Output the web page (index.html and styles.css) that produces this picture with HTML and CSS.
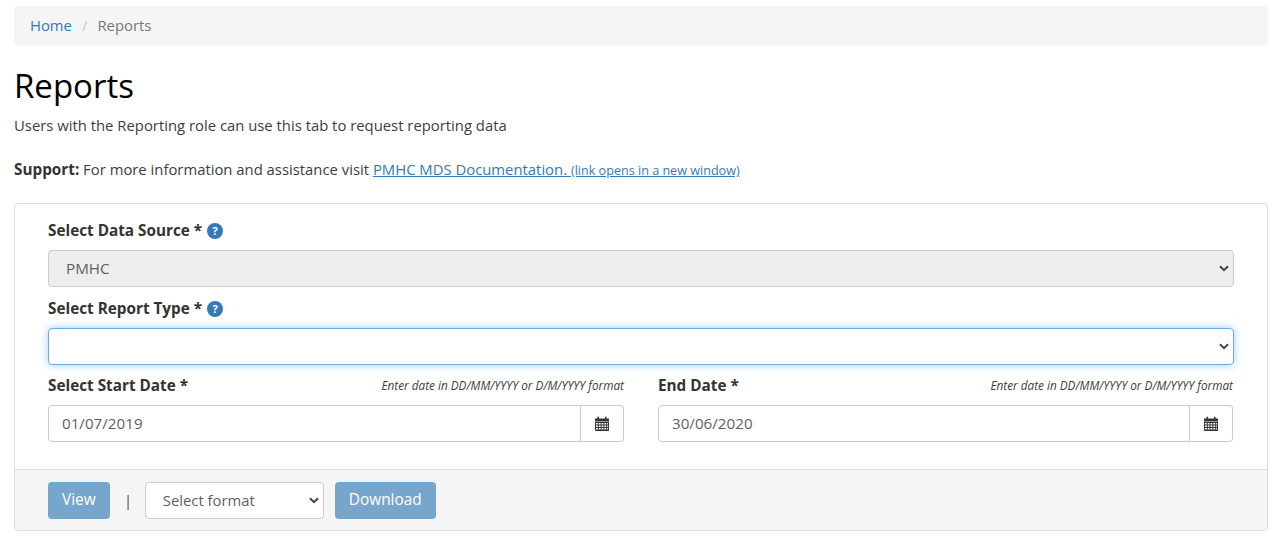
FILE: index.html
```html
<!DOCTYPE html>
<html lang="en">
<head>
<meta charset="UTF-8" />
<title>Reports</title>
<link rel="stylesheet" href="styles.css">
</head>
<body>

<ol class="breadcrumb">
<li><a href="#">Home</a></li>
<li class="sep">/</li>
<li class="current">Reports</li>
</ol>

<h1>Reports</h1>
<p class="intro">Users with the Reporting role can use this tab to request reporting data</p>
<p class="support"><strong>Support:</strong> For more information and assistance visit <a href="#">PMHC MDS Documentation. <small>(link opens in a new window)</small></a></p>

<form class="panel">
<div class="panel-body">
<div class="label-row"><label>Select Data Source *</label><span class="help">?</span></div>
<select class="field" disabled><option>PMHC</option></select>

<div class="label-row"><label>Select Report Type *</label><span class="help">?</span></div>
<select class="field focused"><option></option></select>

<div class="dates">
<div class="date-col">
<div class="label-row spread"><label>Select Start Date *</label><em>Enter date in DD/MM/YYYY or D/M/YYYY format</em></div>
<div class="input-group">
<input type="text" value="01/07/2019">
<span class="addon">
<svg width="14" height="15" viewBox="0 0 15 15" preserveAspectRatio="none"><path fill="#333" d="M0 2.5h2.6V1.2c0-.5.3-.8.8-.8s.8.3.8.8v1.3h6.6V1.2c0-.5.3-.8.8-.8s.8.3.8.8v1.3H15v3H0z"/><path fill="#333" fill-rule="evenodd" d="M0 6h15v8.2c0 .4-.3.7-.7.7H.7c-.4 0-.7-.3-.7-.7zm1 1v1.5h2V7zm3 0v1.5h2V7zm3 0v1.5h2V7zm3 0v1.5h2V7zm3 0v1.5h1V7zM1 9.5V11h2V9.5zm3 0V11h2V9.5zm3 0V11h2V9.5zm3 0V11h2V9.5zm3 0V11h1V9.5zM1 12v1.5h2V12zm3 0v1.5h2V12zm3 0v1.5h2V12zm3 0v1.5h2V12zm3 0v1.5h1V12z"/></svg>
</span>
</div>
</div>
<div class="date-col">
<div class="label-row spread"><label>End Date *</label><em>Enter date in DD/MM/YYYY or D/M/YYYY format</em></div>
<div class="input-group">
<input type="text" value="30/06/2020">
<span class="addon">
<svg width="14" height="15" viewBox="0 0 15 15" preserveAspectRatio="none"><path fill="#333" d="M0 2.5h2.6V1.2c0-.5.3-.8.8-.8s.8.3.8.8v1.3h6.6V1.2c0-.5.3-.8.8-.8s.8.3.8.8v1.3H15v3H0z"/><path fill="#333" fill-rule="evenodd" d="M0 6h15v8.2c0 .4-.3.7-.7.7H.7c-.4 0-.7-.3-.7-.7zm1 1v1.5h2V7zm3 0v1.5h2V7zm3 0v1.5h2V7zm3 0v1.5h2V7zm3 0v1.5h1V7zM1 9.5V11h2V9.5zm3 0V11h2V9.5zm3 0V11h2V9.5zm3 0V11h2V9.5zm3 0V11h1V9.5zM1 12v1.5h2V12zm3 0v1.5h2V12zm3 0v1.5h2V12zm3 0v1.5h2V12zm3 0v1.5h1V12z"/></svg>
</span>
</div>
</div>
</div>
</div>

<div class="panel-footer">
<button type="button" class="btn">View</button>
<span class="divider">|</span>
<select class="format"><option>Select format</option></select>
<button type="button" class="btn">Download</button>
</div>
</form>

</body>
</html>
```

FILE: styles.css
```css
:root {
--text: #3d3d3d;
--link: #337ab7;
--border: #cccccc;
--panel-border: #dddddd;
--grey-bg: #f5f5f5;
--field-text: #5f5f5f;
--chevron: url("data:image/svg+xml,%3Csvg xmlns='http://www.w3.org/2000/svg' width='10' height='7' viewBox='0 0 10 7'%3E%3Cpath d='M1 1.2l4 4 4-4' fill='none' stroke='%23444' stroke-width='2'/%3E%3C/svg%3E");
}

* {
box-sizing: border-box;
}

body {
margin: 0;
padding: 6px 15px 0 14px;
font-family: "Open Sans", sans-serif;
font-size: 14.85px;
line-height: 20px;
color: var(--text);
background: #ffffff;
}

a {
color: var(--link);
}

.breadcrumb {
display: flex;
align-items: center;
height: 40px;
margin: 0;
padding: 0 16px 2px;
list-style: none;
background: var(--grey-bg);
border-radius: 4px;
}

.breadcrumb a {
text-decoration: none;
}

.breadcrumb .sep {
margin: 0 10px;
color: #cccccc;
}

.breadcrumb .current {
color: #777777;
}

h1 {
margin: 18px 0 7px;
font-size: 33px;
font-weight: 400;
line-height: 44px;
color: #000000;
}

.intro {
margin: 0 0 24px;
}

.support {
margin: 0 0 22px;
}

.support strong {
font-size: 15.3px;
font-weight: 700;
color: #333333;
}

.support small {
font-size: 12.6px;
}

.panel {
border: 1px solid var(--panel-border);
border-radius: 4px;
}

.panel-body {
padding: 16px 33px 27px;
}

.label-row {
display: flex;
align-items: center;
gap: 5px;
height: 20px;
margin-bottom: 10px;
}

.label-row.spread {
justify-content: space-between;
}

label {
font-size: 15.3px;
font-weight: 700;
color: #333333;
}

.label-row em {
font-size: 11.75px;
}

.help {
display: flex;
align-items: center;
justify-content: center;
width: 16px;
height: 16px;
margin-top: 1px;
border-radius: 50%;
background: var(--link);
color: #ffffff;
font-size: 11px;
font-weight: 700;
}

.field, .format {
appearance: none;
height: 37px;
padding: 0 17px 1px;
font-family: inherit;
color: var(--field-text);
border: 1px solid var(--border);
border-radius: 4px;
background: #ffffff var(--chevron) no-repeat right 4px center;
}

.field {
display: block;
width: 100%;
margin-bottom: 11px;
font-size: 15.2px;
}

.field:disabled {
background-color: #eeeeee;
opacity: 1;
}

.field.focused {
border-color: #66afe9;
box-shadow: 0 0 8px rgba(102, 175, 233, 0.6);
margin-bottom: 10px;
}

.dates {
display: grid;
grid-template-columns: 576px 575px;
gap: 34px;
}

.input-group {
display: flex;
height: 37px;
}

.input-group input {
flex: 1;
min-width: 0;
padding: 0 13px 2px;
font-family: inherit;
font-size: 15.2px;
color: var(--field-text);
border: 1px solid var(--border);
border-radius: 4px 0 0 4px;
}

.addon {
display: flex;
align-items: center;
justify-content: center;
width: 43px;
border: 1px solid var(--border);
border-left: none;
border-radius: 0 4px 4px 0;
}

.panel-footer {
display: flex;
align-items: center;
height: 61px;
padding: 0 33px;
background: var(--grey-bg);
border-top: 1px solid var(--panel-border);
border-radius: 0 0 3px 3px;
}

.btn {
height: 37px;
padding: 0 14px 2px;
font-family: inherit;
font-size: 15.4px;
color: #ffffff;
background: #77a6cc;
border: none;
border-radius: 4px;
}

.divider {
margin: 0 13px 0 14px;
color: #444444;
will-change: transform;
}

.format {
width: 179px;
margin-right: 11px;
font-size: 14.85px;
}
```
